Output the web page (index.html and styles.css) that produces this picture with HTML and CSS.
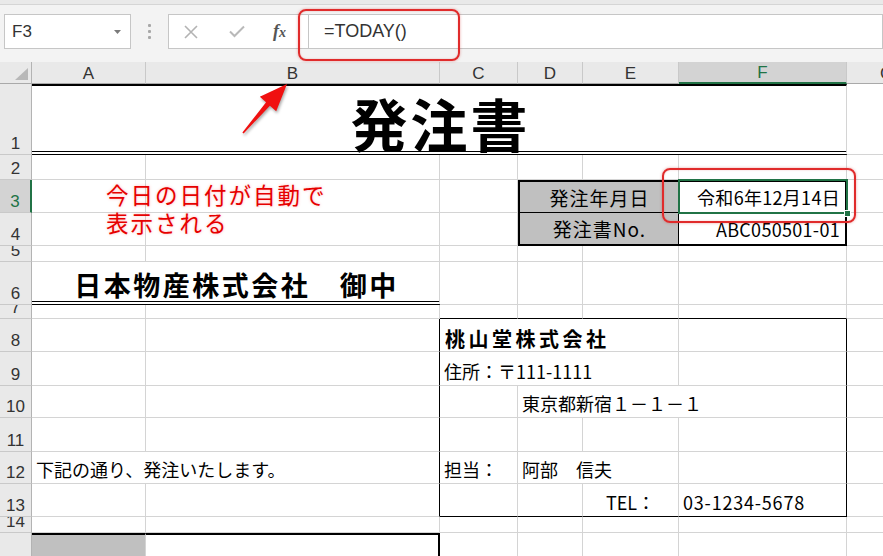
FILE: index.html
```html
<!DOCTYPE html>
<html lang="ja">
<head>
<meta charset="utf-8">
<title>発注書</title>
<link rel="stylesheet" href="styles.css">
</head>
<body>
<div class="app">
  <div class="topstrip"></div>
  <div class="fbar">
    <div class="namebox"><span class="ref">F3</span><svg class="caret" width="7" height="4" viewBox="0 0 7 4"><path d="M0 0H7L3.5 4Z"/></svg></div>
    <div class="grip"><i></i><i></i><i></i></div>
    <div class="fbtns">
      <svg class="ico-x" width="14" height="14" viewBox="0 0 14 14"><path d="M1 1L13 13M13 1L1 13"/></svg>
      <svg class="ico-ok" width="16" height="13" viewBox="0 0 16 13"><path d="M1 6.5L5.5 11L15 1.5"/></svg>
      <span class="fx"><span class="fx-f">f</span><span class="fx-x">x</span></span>
    </div>
    <div class="finput">=TODAY()</div>
  </div>

  <div class="sheet">
    <div class="corner"><svg width="31" height="21" viewBox="0 0 31 21"><path d="M15 18H28V6Z"/></svg></div>
    <div class="ch">A</div><div class="ch">B</div><div class="ch">C</div><div class="ch">D</div><div class="ch">E</div><div class="ch sel">F</div><div class="ch">G</div>

    <div class="rh">1</div><div class="c title s6">発注書</div><div class="c"></div>

    <div class="rh">2</div><div class="c"></div><div class="c"></div><div class="c"></div><div class="c"></div><div class="c"></div><div class="c"></div><div class="c"></div>

    <div class="rh sel">3</div><div class="c"></div><div class="c"></div><div class="c"></div><div class="c lbl s2 tt">発注年月日</div><div class="c val tt">令和6年12月14日</div><div class="c"></div>

    <div class="rh">4</div><div class="c"></div><div class="c"></div><div class="c"></div><div class="c lbl s2 tb">発注書No.</div><div class="c val tb">ABC050501-01</div><div class="c"></div>

    <div class="rh">5</div><div class="c"></div><div class="c"></div><div class="c"></div><div class="c"></div><div class="c"></div><div class="c"></div><div class="c"></div>

    <div class="rh">6</div><div class="c dest s2">日本物産株式会社　御中</div><div class="c"></div><div class="c"></div><div class="c"></div><div class="c"></div><div class="c"></div>

    <div class="rh">7</div><div class="c"></div><div class="c"></div><div class="c bb"></div><div class="c bb"></div><div class="c bb"></div><div class="c bb"></div><div class="c"></div>

    <div class="rh">8</div><div class="c"></div><div class="c br"></div><div class="c s3 firm">桃山堂株式会社</div><div class="c br"></div><div class="c"></div>

    <div class="rh">9</div><div class="c"></div><div class="c br"></div><div class="c s3 tx">住所：〒111-1111</div><div class="c br"></div><div class="c"></div>

    <div class="rh">10</div><div class="c"></div><div class="c br"></div><div class="c"></div><div class="c s3 br tx">東京都新宿１－１－１</div><div class="c"></div>

    <div class="rh">11</div><div class="c"></div><div class="c br"></div><div class="c"></div><div class="c"></div><div class="c"></div><div class="c br"></div><div class="c"></div>

    <div class="rh">12</div><div class="c s2 br tx">下記の通り、発注いたします。</div><div class="c tx">担当：</div><div class="c s2 tx">阿部　信夫</div><div class="c br"></div><div class="c"></div>

    <div class="rh">13</div><div class="c"></div><div class="c br"></div><div class="c bb"></div><div class="c bb"></div><div class="c bb tx mid">TEL：</div><div class="c bb br tx num">03-1234-5678</div><div class="c"></div>

    <div class="rh">14</div><div class="c"></div><div class="c"></div><div class="c"></div><div class="c"></div><div class="c"></div><div class="c"></div><div class="c"></div>

    <div class="rh">15</div><div class="c gray tk"></div><div class="c tk tr"></div><div class="c"></div><div class="c"></div><div class="c"></div><div class="c"></div><div class="c"></div>
  </div>

  <div class="note">今日の日付が自動で<br>表示される</div>
  <svg class="arrow" width="883" height="556" viewBox="0 0 883 556"><path d="M242.4 132.5L266.1 102.3L259.8 96.7L287 84L276.2 111.3L269.9 105.7L243.6 133.5Z"/></svg>
  <div class="selection"><span class="handle"></span></div>
  <div class="callout callout-formula"></div>
  <div class="callout callout-cell"></div>
</div>
</body>
</html>
```
FILE: styles.css
```css
* { box-sizing: border-box; margin: 0; padding: 0; }
html, body { width: 883px; height: 556px; overflow: hidden; background: #fff; }
body { font-family: "Noto Sans CJK JP", "Noto Sans", sans-serif; color: #000; }

.app { position: relative; width: 883px; height: 556px; overflow: hidden; }

/* ---------- formula bar ---------- */
.topstrip { height: 5px; background: #e9e9e9; border-bottom: 1px solid #d5d5d5; }
.fbar { height: 57px; background: #f3f3f3; display: flex; align-items: flex-start; padding-top: 9px; }
.namebox {
  margin-left: 4px; width: 127px; height: 35px; background: #fff;
  border: 1px solid #c6c6c6; display: flex; align-items: center;
  justify-content: space-between; padding: 0 9px 0 7px;
}
.ref { font-family: "Liberation Sans", sans-serif; font-size: 17px; color: #333; }
.caret { fill: #7a7a7a; }
.grip { width: 37px; height: 35px; display: flex; flex-direction: column; align-items: center; justify-content: center; gap: 3px; }
.grip i { width: 3px; height: 3px; background: #a8a8a8; border-radius: 1px; }
.fbtns {
  width: 140px; height: 35px; background: #fff; border: 1px solid #c6c6c6; border-right: none;
  display: flex; align-items: center;
}
.ico-x { margin-left: 15px; stroke: #b3b3b3; stroke-width: 1.6; fill: none; }
.ico-ok { margin-left: 31px; stroke: #b9b9b9; stroke-width: 2; fill: none; }
.fx { margin-left: 28px; font-family: "Liberation Serif", serif; font-style: italic; font-weight: bold; color: #555; font-size: 18px; }
.fx-x { font-size: 14px; }
.finput {
  flex: 1; height: 35px; background: #fff; border: 1px solid #c6c6c6;
  padding-left: 15px; display: flex; align-items: center;
  font-family: "Liberation Sans", sans-serif; font-size: 18px; color: #333;
}

/* ---------- sheet grid ---------- */
.sheet {
  display: grid;
  grid-template-columns: 32px 114px 294px 78px 65px 96px 168px 80px;
  grid-template-rows: 22px 71px 25px 33px 33px 16px 43px 14px 33px 34px 32px 34px 32px 33px 16px 60px;
  width: max-content;
}
.corner { background: #e9e9e9; border-right: 1px solid #b3b3b3; border-bottom: 1px solid #a9a9a9; }
.corner path { fill: #b8b8b8; }
.ch {
  background: #e9e9e9; border-right: 1px solid #c9c9c9; border-bottom: 1px solid #a9a9a9;
  display: flex; align-items: flex-end; justify-content: center; padding-bottom: 1px;
  font-family: "Liberation Sans", sans-serif; font-size: 17px; line-height: 1; color: #333;
}
.ch.sel { background: #d3d3d3; color: #217346; border-bottom: 2px solid #217346; }
.rh {
  background: #e9e9e9; border-right: 1px solid #b3b3b3; border-bottom: 1px solid #c9c9c9;
  display: flex; align-items: flex-end; justify-content: center; padding-bottom: 2px; overflow: hidden;
  font-family: "Liberation Sans", sans-serif; font-size: 17px; line-height: 1; color: #333;
}
.rh.sel { background: #d3d3d3; color: #217346; border-right: 2px solid #217346; }

.c {
  border-right: 1px solid #d4d4d4; border-bottom: 1px solid #d4d4d4;
  display: flex; align-items: flex-end; white-space: nowrap;
  font-size: 18px; line-height: 1; padding: 0 4px 5px; min-width: 0;
}
.s2 { grid-column: span 2; }
.s3 { grid-column: span 3; }
.s6 { grid-column: span 6; }

.title {
  justify-content: center; font-weight: bold; font-size: 57px; letter-spacing: 3px; padding: 0 0 0 3px;
  border-top: 2px solid #000; border-bottom: 4px double #000;
}
.dest {
  justify-content: center; font-weight: bold; font-size: 27px; letter-spacing: 2.5px; padding: 0 0 3px 2px;
  border-bottom: 4px double #000;
}

.lbl { background: #c0c0c0; justify-content: center; align-items: center; font-size: 19px; letter-spacing: 1px; padding: 0 0 0 1px; border-left: 2px solid #000; border-right: 1px solid #000; }
.val { justify-content: flex-end; align-items: center; font-size: 18px; letter-spacing: 0.3px; padding: 0 5px 0 0; border-right: 2px solid #000; }
.tt { border-top: 2px solid #000; border-bottom: 1px solid #000; }
.tb { border-bottom: 2px solid #000; }

.bb { border-bottom-color: #000; }
.br { border-right-color: #000; }
.firm { font-weight: bold; font-size: 20px; letter-spacing: 3.5px; padding: 0 0 2px 5px; }
.tx { padding-left: 4px; }
.num { letter-spacing: 0.8px; }
.mid { justify-content: center; }

.gray { background: #c0c0c0; }
.tk { border-top: 2px solid #000; }
.tr { border-right: 2px solid #000; }

/* ---------- overlays ---------- */
.note {
  position: absolute; left: 106px; top: 180px;
  font-size: 22.5px; line-height: 28px; letter-spacing: 2px; color: #e60000;
  text-shadow: 0 0 3px rgba(255, 60, 60, 0.35);
}
.arrow { position: absolute; left: 0; top: 0; pointer-events: none; }
.arrow path { fill: #f01010; filter: drop-shadow(1px 2px 1.5px rgba(0, 0, 0, 0.35)); }
.selection {
  position: absolute; left: 678px; top: 179px; width: 170px; height: 35px;
  border: 2px solid #217346;
}
.handle {
  position: absolute; right: -5px; bottom: -5px; width: 7px; height: 7px;
  background: #217346; border: 1px solid #fff;
}
.callout {
  position: absolute; border: 2px solid #e02b2b; border-radius: 8px;
  box-shadow: 0 0 3px rgba(200, 0, 0, 0.35), inset 0 0 2px rgba(200, 0, 0, 0.25);
}
.callout-formula { left: 298px; top: 9px; width: 162px; height: 52px; }
.callout-cell { left: 662px; top: 168px; width: 194px; height: 55px; }
```
